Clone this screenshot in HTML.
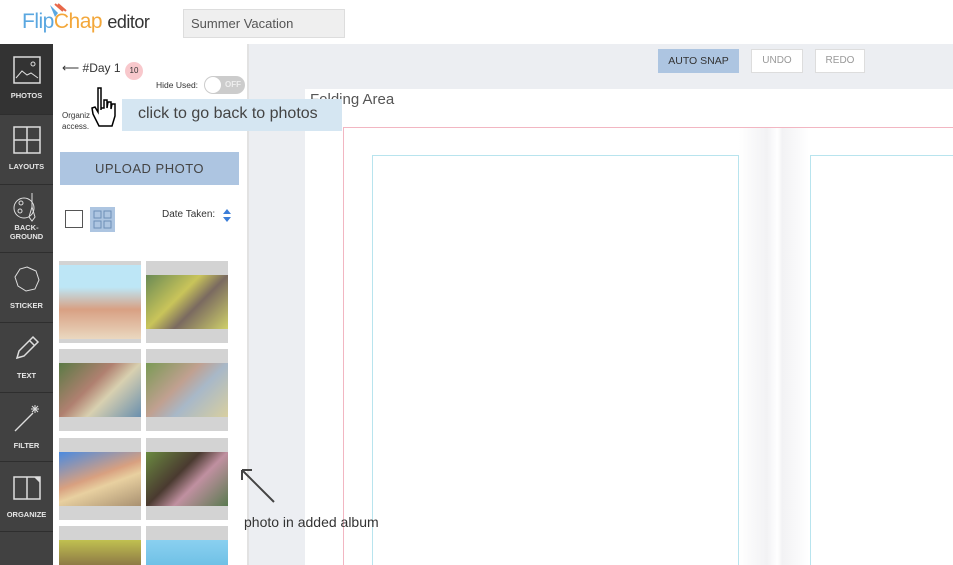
<!DOCTYPE html><html style="overflow:hidden;height:565px"><head><style>
*{box-sizing:border-box;margin:0;padding:0}
body{width:953px;height:565px;overflow:hidden;font-family:"Liberation Sans",sans-serif;background:#eceef2;position:relative}
.a{position:absolute}
.side{left:0;top:44px;width:53px;height:521px;background:#414141}
.it{position:absolute;left:0;width:53px;color:#e6e6e6;font-size:7.5px;font-weight:bold;text-align:center;border-bottom:1px solid #2e2e2e}
.it svg{display:block;margin:0 auto}
.ph{position:absolute;width:82px;height:82px;background:#d3d3d3;overflow:hidden}
.ph div{position:absolute;left:0;right:0}
</style></head><body>
<div class="a" style="left:0;top:0;width:953px;height:44px;background:#fff"></div>
<div class="a" style="left:22px;top:10px;font-size:21px;letter-spacing:-0.5px"><span style="color:#5aa7e0">Flip</span><span style="color:#f3a73a">Chap</span> <span style="color:#333;font-size:18px">editor</span></div>
<svg class="a" style="left:47px;top:3px" width="22" height="16"><path d="M3 2l8 8-3 4z" fill="#5aa7e0"/><path d="M8 1l8 7M11 1l8 7" stroke="#e8684a" stroke-width="2" fill="none"/></svg>
<div class="a" style="left:183px;top:9px;width:162px;height:29px;background:#efefef;border:1px solid #ddd;font-size:13px;color:#555;padding:6px 7px">Summer Vacation</div>
<div class="a side"></div>
<div class="it" style="top:44px;height:71px;background:#333;padding-top:12px"><svg width="28" height="28"><rect x="1" y="1" width="26" height="26" fill="none" stroke="#ddd" stroke-width="1.5"/><path d="M3 22l6-7 5 4 4-2 7 5" fill="none" stroke="#ddd"/><circle cx="20" cy="8" r="2" fill="none" stroke="#ddd"/></svg><div style="margin-top:7px">PHOTOS</div></div>
<div class="it" style="top:115px;height:70px;padding-top:11px"><svg width="28" height="28"><rect x="1" y="1" width="26" height="26" fill="none" stroke="#ddd" stroke-width="1.5"/><path d="M14 1v26M1 14h26" stroke="#ddd" stroke-width="1.5"/></svg><div style="margin-top:8px">LAYOUTS</div></div>
<div class="it" style="top:185px;height:68px;padding-top:6px"><svg width="30" height="32"><circle cx="12" cy="17" r="10" fill="none" stroke="#ddd"/><circle cx="9" cy="12" r="2" fill="none" stroke="#ddd"/><circle cx="8" cy="20" r="2" fill="none" stroke="#ddd"/><path d="M20 2v14l-3 10 3 4 3-4-3-10" fill="none" stroke="#ddd"/></svg><div>BACK-<br>GROUND</div></div>
<div class="it" style="top:253px;height:70px;padding-top:12px"><svg width="28" height="28"><path d="M14 2l9 4 3 9-4 9-9 2-8-5-3-9 5-8z" fill="none" stroke="#ddd"/></svg><div style="margin-top:8px">STICKER</div></div>
<div class="it" style="top:323px;height:70px;padding-top:11px"><svg width="28" height="28"><path d="M4 24l2-7 14-14 5 5-14 14z M16 6l5 5" fill="none" stroke="#ddd" stroke-width="1.5"/></svg><div style="margin-top:9px">TEXT</div></div>
<div class="it" style="top:393px;height:69px;padding-top:10px"><svg width="28" height="30"><path d="M2 28l18-18" stroke="#ddd" stroke-width="1.3"/><path d="M22 2v8M18 6h8M19 3l6 6M25 3l-6 6" stroke="#ddd"/></svg><div style="margin-top:8px">FILTER</div></div>
<div class="it" style="top:462px;height:70px;padding-top:13px"><svg width="28" height="26"><rect x="1" y="2" width="26" height="22" fill="none" stroke="#ddd" stroke-width="1.5"/><path d="M14 2v22" stroke="#ddd" stroke-width="1.5"/><path d="M21 2h6v6" fill="#ddd"/></svg><div style="margin-top:9px">ORGANIZE</div></div>
<div class="a" style="left:53px;top:44px;width:196px;height:521px;background:#fff;border-right:2px solid #e2e2e2"></div>
<div class="a" style="left:62px;top:61px;font-size:12px;color:#333">⟵ #Day 1</div>
<div class="a" style="left:125px;top:62px;width:18px;height:18px;border-radius:50%;background:#f8c8cc;font-size:8px;text-align:center;line-height:18px;color:#333">10</div>
<div class="a" style="left:156px;top:80px;font-size:8.5px;color:#333">Hide Used:</div>
<div class="a" style="left:204px;top:76px;width:41px;height:18px;border-radius:9px;background:#ccc"><div style="position:absolute;left:1px;top:1px;width:16px;height:16px;border-radius:50%;background:#fff"></div><span style="position:absolute;left:21px;top:4px;font-size:8px;color:#eee;font-weight:bold">OFF</span></div>
<div class="a" style="left:62px;top:110px;font-size:8px;color:#333;line-height:11px">Organiz<br>access.</div>
<div class="a" style="left:60px;top:152px;width:179px;height:33px;background:#adc5e1;font-size:13px;color:#444;letter-spacing:.5px;text-align:center;line-height:33px">UPLOAD PHOTO</div>
<div class="a" style="left:65px;top:210px;width:18px;height:18px;border:1px solid #555"></div>
<div class="a" style="left:90px;top:207px;width:25px;height:25px;background:#adc5e1"><svg width="25" height="25"><g fill="none" stroke="#6d8fb8"><rect x="4" y="4" width="7" height="7"/><rect x="14" y="4" width="7" height="7"/><rect x="4" y="14" width="7" height="7"/><rect x="14" y="14" width="7" height="7"/></g></svg></div>
<div class="a" style="left:162px;top:209px;font-size:10px;color:#333">Date Taken:</div>
<svg class="a" style="left:222px;top:208px" width="10" height="15"><path d="M1 6l4-5 4 5zM1 9l4 5 4-5z" fill="#3b7dd8"/></svg>
<div class="ph" style="left:59px;top:261px"><div style="top:4px;height:74px;background:linear-gradient(#bde6f6 30%,#d8a083 60%,#ead8c0)"></div></div>
<div class="ph" style="left:146px;top:261px"><div style="top:14px;height:54px;background:linear-gradient(135deg,#6a8a55,#c9c45a 40%,#7a6a60 60%,#cfd06a)"></div></div>
<div class="ph" style="left:59px;top:349px"><div style="top:14px;height:54px;background:linear-gradient(135deg,#5a7a45,#b08070 40%,#d8d0b0 60%,#6a8fae)"></div></div>
<div class="ph" style="left:146px;top:349px"><div style="top:14px;height:54px;background:linear-gradient(135deg,#7a9a55,#c0a090 40%,#a8b8c8 60%,#d8cfa0)"></div></div>
<div class="ph" style="left:59px;top:438px"><div style="top:14px;height:54px;background:linear-gradient(160deg,#4a8ae0,#d8a080 45%,#e8d0a0 60%,#a89070)"></div></div>
<div class="ph" style="left:146px;top:438px"><div style="top:14px;height:54px;background:linear-gradient(135deg,#6a8a40,#4a3a30 40%,#c090a0 60%,#5a7a50)"></div></div>
<div class="ph" style="left:59px;top:526px;height:39px"><div style="top:14px;height:40px;background:linear-gradient(#c0c050,#705040)"></div></div>
<div class="ph" style="left:146px;top:526px;height:39px"><div style="top:14px;height:40px;background:linear-gradient(#8ad0f0,#60b8e0)"></div></div>
<div class="a" style="left:658px;top:49px;width:81px;height:24px;background:#adc5e1;font-size:10.5px;color:#333;text-align:center;line-height:24px">AUTO SNAP</div>
<div class="a" style="left:751px;top:49px;width:52px;height:24px;background:#fff;border:1px solid #ddd;font-size:10px;color:#999;text-align:center;line-height:22px">UNDO</div>
<div class="a" style="left:815px;top:49px;width:50px;height:24px;background:#fff;border:1px solid #ddd;font-size:10px;color:#999;text-align:center;line-height:22px">REDO</div>
<div class="a" style="left:305px;top:89px;width:648px;height:476px;background:#fff"></div>
<div class="a" style="left:310px;top:91px;font-size:15px;color:#555">Folding Area</div>
<div class="a" style="left:343px;top:127px;width:610px;height:438px;border-left:1px solid #f2b6c2;border-top:1px solid #f2b6c2"></div>
<div class="a" style="left:739px;top:128px;width:70px;height:437px;background:linear-gradient(90deg,#fff,#f2f2f4 40%,#fff 55%,#f2f2f4 62%,#fff)"></div>
<div class="a" style="left:372px;top:155px;width:367px;height:410px;border:1px solid #b8e4ee;border-bottom:none"></div>
<div class="a" style="left:810px;top:155px;width:143px;height:410px;border-left:1px solid #b8e4ee;border-top:1px solid #b8e4ee"></div>
<svg class="a" style="left:238px;top:464px" width="40" height="40"><path d="M36 38L4 6M4 6v10M4 6h10" stroke="#444" stroke-width="2" fill="none"/></svg>
<div class="a" style="left:244px;top:514px;font-size:14px;color:#333;white-space:nowrap">photo in added album</div>
<div class="a" style="left:122px;top:99px;width:220px;height:32px;background:#d5e6f2;font-size:16px;color:#444;padding:6px 16px;white-space:nowrap">click to go back to photos</div>
<svg class="a" style="left:90px;top:86px" width="36" height="46"><path d="M8 2h3v22 -2l3 0 0-8h3v8l1-6h3v7l1-5h3v12l-3 10H9L3 28l-1-6 3-1 3 5z" fill="#fff" stroke="#000" stroke-width="1.5"/></svg>
</body></html>
